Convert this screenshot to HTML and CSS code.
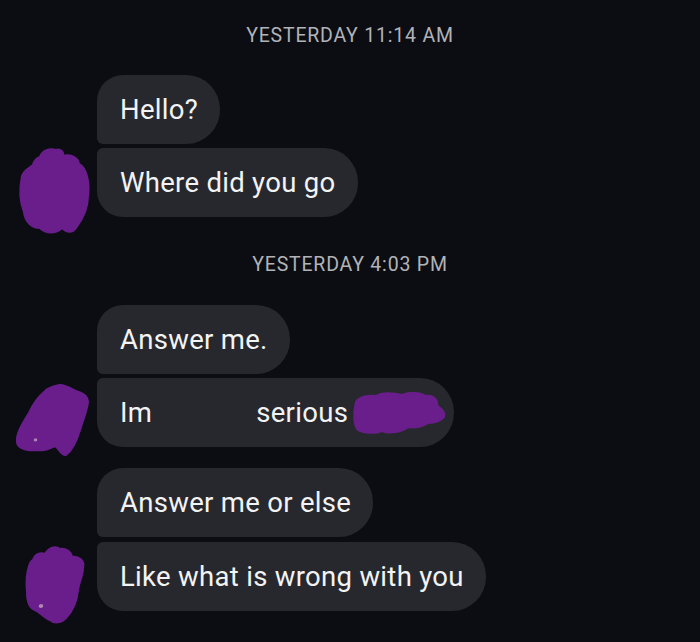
FILE: index.html
```html
<!DOCTYPE html>
<html lang="en">
<head>
<meta charset="utf-8">
<title>Chat</title>
<link rel="stylesheet" href="styles.css">
</head>
<body>
<main class="chat">
  <div class="stamp stamp-first">YESTERDAY 11:14 AM</div>
  <section class="group">
    <div class="row">
      <div class="avatar"></div>
      <div class="bubble first">Hello?</div>
    </div>
    <div class="row">
      <div class="avatar">
        <svg class="scribble" width="97" height="69" viewBox="0 0 97 69" aria-hidden="true">
          <path d="M40 9 C42 2 50 0 56 2 C60 0 64 4 63 8 C70 6 78 9 79 16 C86 19 90 34 88 48 C88 62 82 72 76 80 C72 86 66 84 62 80 C56 86 46 86 40 80 C32 80 25 74 24 64 C19 52 20 38 22 28 C24 22 30 20 33 17 C34 13 37 10 40 9 Z" />
        </svg>
      </div>
      <div class="bubble last">Where did you go</div>
    </div>
  </section>

  <div class="stamp stamp-second">YESTERDAY 4:03 PM</div>
  <section class="group">
    <div class="row">
      <div class="avatar"></div>
      <div class="bubble first">Answer me.</div>
    </div>
    <div class="row">
      <div class="avatar">
        <svg class="scribble" width="97" height="69" viewBox="0 0 97 69" aria-hidden="true">
          <path d="M17 64 C16 56 22 46 29 35 C33 26 38 19 44 14 C48 9 54 8 59 7 C64 6 70 10 76 13 C83 15 88 18 88 24 C87 33 83 42 80 52 C77 62 73 72 66 77 C61 78 59 70 55 68 C50 70 46 73 41 72 C35 72 29 73 24 71 C20 70 17 67 17 64 Z" />
          <path class="speck" d="M34 61 C36 59 38 61 37 63 C35 64 33 63 34 61 Z" />
        </svg>
      </div>
      <div class="bubble last serious">
        <span>Im</span>
        <span class="gap"></span>
        <span>serious</span>
        <svg class="hide" width="95" height="46" viewBox="0 0 95 46" aria-hidden="true">
          <path d="M4 12 C8 6 16 5 24 6 C30 2 42 3 50 5 C58 2 68 2 74 6 C80 5 86 9 85 15 C88 18 94 22 92 27 C88 32 82 33 76 33 C70 37 62 38 56 37 C50 42 38 44 30 41 C22 44 12 43 6 40 C2 36 1 24 4 12 Z" />
        </svg>
      </div>
    </div>
  </section>

  <section class="group group-third">
    <div class="row">
      <div class="avatar"></div>
      <div class="bubble first">Answer me or else</div>
    </div>
    <div class="row">
      <div class="avatar">
        <svg class="scribble" width="97" height="69" viewBox="0 0 97 69" aria-hidden="true">
          <path d="M33 18 C35 12 41 10 45 12 C49 6 55 3 60 7 C65 6 71 9 72 15 C78 14 85 18 83 26 C83 34 79 40 78 48 C77 58 74 68 66 76 C62 81 54 82 50 78 C44 76 40 70 35 68 C29 66 27 58 27 50 C26 40 27 30 29 24 C30 21 31 19 33 18 Z" />
          <path class="speck" d="M39 63 C41 61 44 62 43 65 C41 67 38 66 39 63 Z" />
        </svg>
      </div>
      <div class="bubble last">Like what is wrong with you</div>
    </div>
  </section>
</main>
</body>
</html>
```

FILE: styles.css
```css
html, body {
  margin: 0;
  padding: 0;
}

body {
  background: #0c0d12;
  width: 700px;
  height: 642px;
  overflow: hidden;
  font-family: Roboto, "Liberation Sans", sans-serif;
  color: #f3f3f4;
}

.chat {
  display: flex;
  flex-direction: column;
}

.stamp {
  text-align: center;
  font-size: 19.5px;
  line-height: 24px;
  color: #b1b3b8;
  letter-spacing: 0.8px;
}

.stamp-first {
  margin-top: 24px;
  margin-bottom: 27px;
}

.stamp-second {
  margin-top: 36px;
  margin-bottom: 28px;
}

.group {
  display: flex;
  flex-direction: column;
  gap: 4px;
}

.group-third {
  margin-top: 21px;
  gap: 5px;
}

.row {
  display: flex;
  align-items: flex-start;
}

.avatar {
  width: 97px;
  height: 69px;
  flex: none;
}

.scribble {
  display: block;
  overflow: visible;
}

.scribble path,
.hide path {
  fill: #6a1e8c;
  stroke: #6a1e8c;
  stroke-width: 2;
  stroke-linejoin: round;
}

.scribble path.speck {
  fill: #cdb0c0;
  stroke: none;
  opacity: 0.7;
}

.bubble {
  background: #27282d;
  font-size: 27.5px;
  letter-spacing: 0.3px;
  line-height: 31px;
  height: 31px;
  padding: 19px 22px 19px 23px;
  white-space: nowrap;
}

.bubble.first {
  border-radius: 26px 34px 34px 6px;
}

.bubble.last {
  border-radius: 6px 34px 34px 26px;
}

.serious {
  display: flex;
  align-items: center;
  padding-right: 7px;
}

.serious .gap {
  width: 104px;
}

.hide {
  display: block;
  margin: -8px 0 -8px 4px;
}
```
